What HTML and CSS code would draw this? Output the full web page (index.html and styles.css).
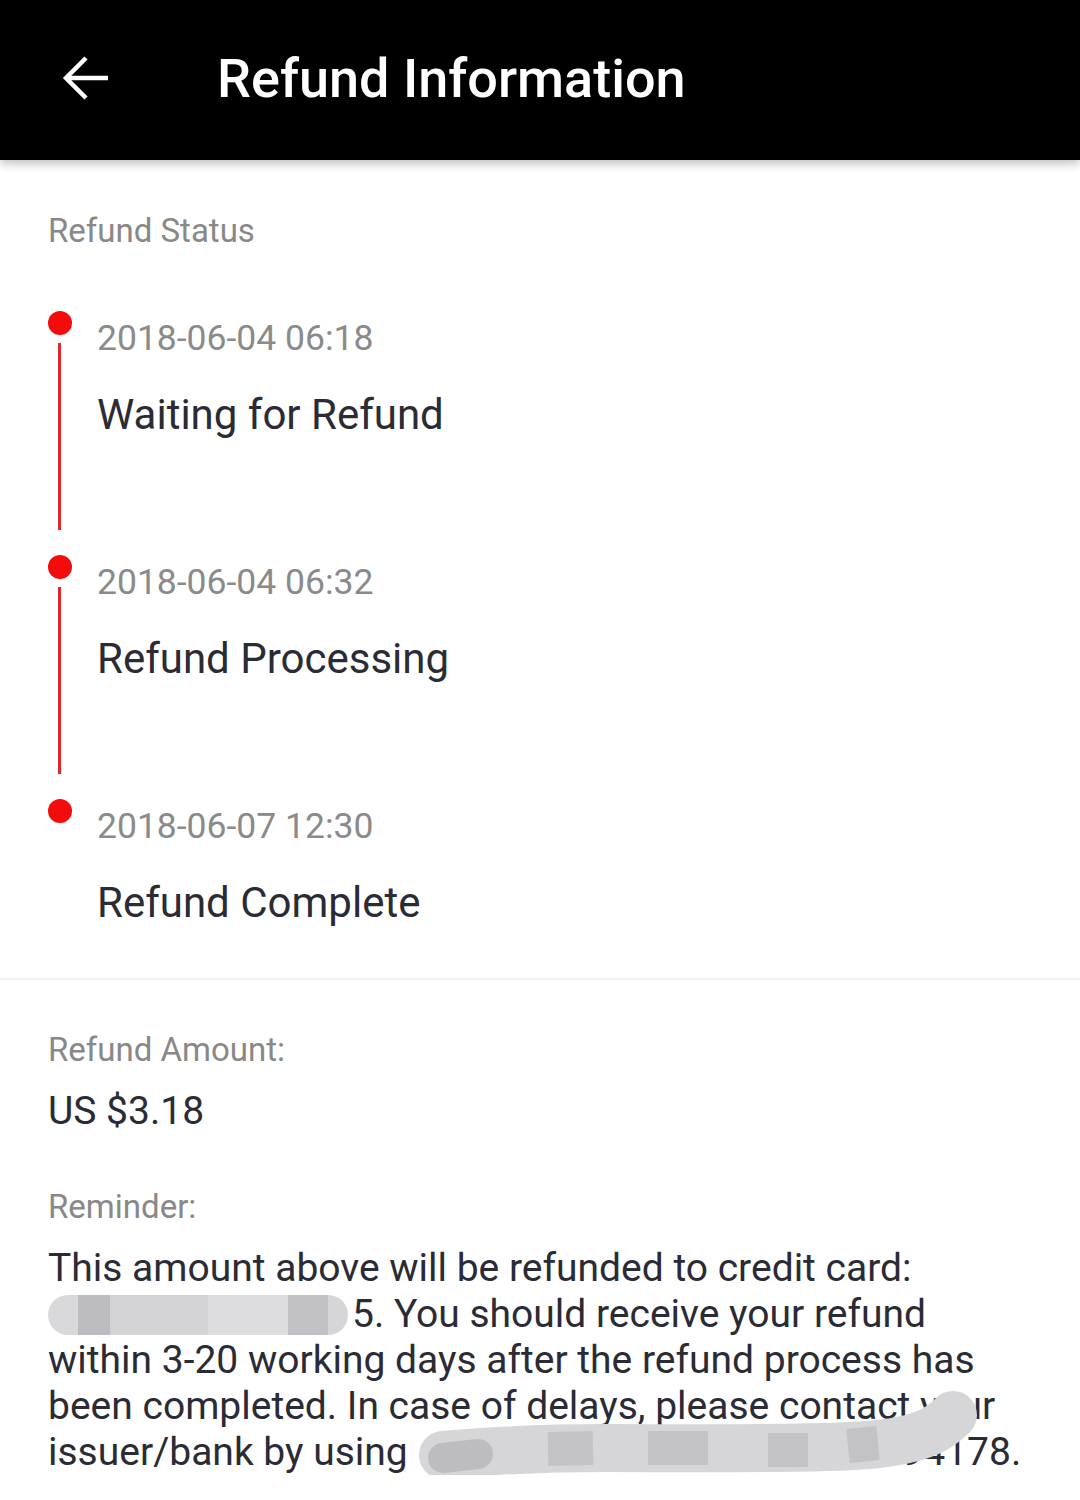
FILE: index.html
```html
<!DOCTYPE html>
<html lang="en">
<head>
    <meta charset="UTF-8">
    <meta name="viewport" content="width=device-width, initial-scale=1.0">
    <title>Refund Information</title>
    <link rel="stylesheet" href="styles.css">
</head>
<body>
    <header class="topbar">
        <a href="#" class="back-btn" aria-label="Back">
            <svg width="48" height="46" viewBox="0 0 48 46">
                <path d="M47 23H5M25 3L5 23l20 20" fill="none" stroke="#fff" stroke-width="4.5"/>
            </svg>
        </a>
        <h1>Refund Information</h1>
    </header>

    <section class="status-section">
        <div class="label">Refund Status</div>
        <ul class="timeline">
            <li class="step">
                <div class="marker"><span class="dot"></span><span class="line"></span></div>
                <div class="step-body">
                    <div class="step-date">2018-06-04 06:18</div>
                    <div class="step-title">Waiting for Refund</div>
                </div>
            </li>
            <li class="step">
                <div class="marker"><span class="dot"></span><span class="line"></span></div>
                <div class="step-body">
                    <div class="step-date">2018-06-04 06:32</div>
                    <div class="step-title">Refund Processing</div>
                </div>
            </li>
            <li class="step last">
                <div class="marker"><span class="dot"></span></div>
                <div class="step-body">
                    <div class="step-date">2018-06-07 12:30</div>
                    <div class="step-title">Refund Complete</div>
                </div>
            </li>
        </ul>
    </section>

    <section class="amount-section">
        <div class="label">Refund Amount:</div>
        <div class="amount">US $3.18</div>
        <div class="label reminder-label">Reminder:</div>
        <p class="reminder">
            This amount above will be refunded to credit card:<br>
            <span class="blur blur-card"></span>5. You should receive your refund<br>
            within 3-20 working days after the refund process has<br>
            been completed. In case of delays, please contact your<br>
            issuer/bank by using <span class="blur-gap"></span>94178.
            <!-- redaction smear over the phone number -->
            <svg class="smear" width="1032" height="240" viewBox="0 0 1032 240">
                <path d="M395 210 C450 205 500 203 560 203 S760 205 820 200 S895 180 905 170" fill="none" stroke="#d6d6d9" stroke-width="48" stroke-linecap="round"/>
                <path d="M500 204 L545 203 M600 203 L660 203 M720 205 L760 205 M800 201 L830 198" stroke="#c3c3c7" stroke-width="34"/>
                <path d="M395 213 L430 209" stroke="#bdbdc1" stroke-width="30" stroke-linecap="round"/>
            </svg>
        </p>
    </section>
</body>
</html>
```

FILE: styles.css
```css
body {
    margin: 0;
    font-family: Roboto, "Noto Sans", sans-serif;
    background: #fff;
    color: #2b2b35;
}
.topbar {
    height: 160px;
    background: #000;
    display: flex;
    align-items: center;
    box-shadow: 0 3px 10px rgba(0, 0, 0, 0.28);
    position: relative;
}
.back-btn {
    display: flex;
    margin-left: 61px;
    margin-top: -4px;
}
.topbar h1 {
    margin: -4px 0 0 108px;
    color: #fff;
    font-size: 54px;
    font-weight: 500;
}
.status-section {
    padding: 51px 0 50px 48px;
    border-bottom: 2px solid #f0f0f0;
}
.label {
    font-size: 33px;
    line-height: 40px;
    color: #888;
}
.timeline {
    list-style: none;
    margin: 60px 0 0;
    padding: 0;
}
.step {
    display: flex;
    height: 244px;
}
.step.last {
    height: auto;
}
.marker {
    width: 49px;
    display: flex;
    flex-direction: column;
    align-items: flex-start;
}
.dot {
    width: 24px;
    height: 24px;
    border-radius: 50%;
    background: #f40b0b;
}
.line {
    width: 3px;
    height: 187px;
    margin: 8px 0 0 10px;
    background: #e2262c;
}
.step-date {
    margin-top: 5px;
    font-size: 35.5px;
    line-height: 44px;
    color: #8a8a8a;
}
.step-title {
    margin-top: 30px;
    font-size: 42px;
    line-height: 50px;
    color: #2b2b35;
}
.amount-section {
    padding: 50px 48px 0;
}
.amount {
    margin-top: 16px;
    font-size: 39px;
    line-height: 50px;
}
.reminder-label {
    margin-top: 51px;
}
.reminder {
    position: relative;
    margin: 18px 0 0;
    font-size: 39px;
    line-height: 46px;
    white-space: nowrap;
}
.blur {
    display: inline-block;
    vertical-align: -8px;
    height: 40px;
    border-radius: 20px;
}
.blur-card {
    width: 300px;
    margin-right: 4px;
    background: linear-gradient(90deg, #d9d9db 0, #d9d9db 30px, #bdbdc1 30px, #bdbdc1 62px, #d4d4d6 62px, #d4d4d6 160px, #dddddf 160px, #dddddf 240px, #c2c2c6 240px, #c2c2c6 280px, #d6d6d8 280px);
}
.blur-gap {
    display: inline-block;
    width: 484px;
}
.smear {
    position: absolute;
    left: 0;
    top: 0;
}
```
